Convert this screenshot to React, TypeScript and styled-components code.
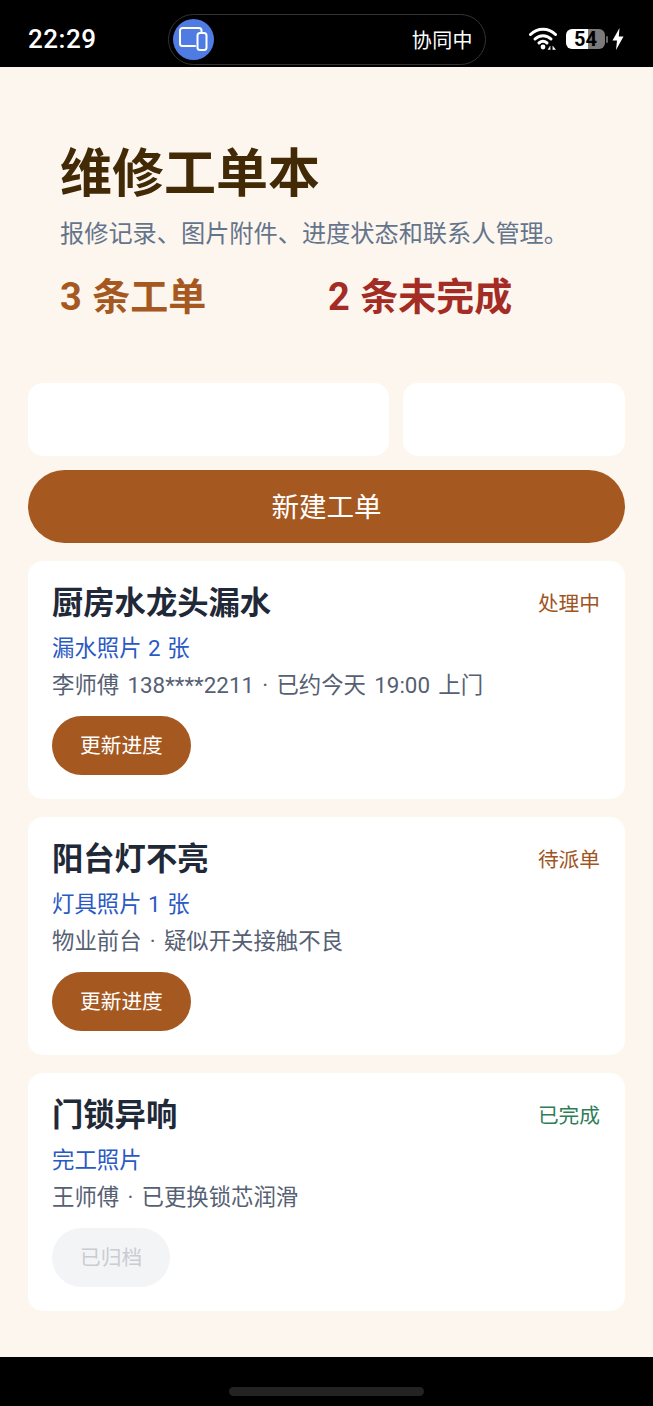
import React from 'react';
import styled, { createGlobalStyle } from 'styled-components';

const GlobalStyle = createGlobalStyle`
  html, body {
    margin: 0;
    padding: 0;
    background: #000000;
  }
  body {
    font-family: Roboto, "Noto Sans CJK SC", "Noto Sans", sans-serif;
  }
  * {
    box-sizing: border-box;
  }
`;

const Screen = styled.div`
  width: 653px;
  height: 1406px;
  display: flex;
  flex-direction: column;
  background: #000000;
  overflow: hidden;
`;

const StatusBar = styled.div`
  height: 67px;
  flex: none;
  padding: 11px 29px 0 28px;
  display: flex;
  align-items: center;
  color: #ffffff;
`;

const Clock = styled.div`
  width: 140px;
  font-size: 26px;
  font-weight: 500;
  letter-spacing: 0.5px;
`;

const Island = styled.div`
  width: 318px;
  height: 51px;
  padding: 0 12px 0 4px;
  border: 1px solid #333333;
  border-radius: 26px;
  display: flex;
  align-items: center;
  justify-content: space-between;
`;

const IslandIcon = styled.div`
  width: 41px;
  height: 41px;
  border-radius: 50%;
  background: #4f7be3;
  display: flex;
  align-items: center;
  justify-content: center;
`;

const IslandLabel = styled.span`
  font-size: 20px;
  letter-spacing: 0.4px;
`;

const StatusIcons = styled.div`
  margin-left: auto;
  display: flex;
  align-items: center;
`;

const Battery = styled.div`
  width: 39px;
  height: 20px;
  margin-left: 8px;
  border-radius: 6px;
  background: linear-gradient(90deg, #ffffff 0 56%, #7a7a7a 56% 100%);
  color: #000000;
  font-size: 20px;
  font-weight: 700;
  line-height: 20px;
  text-align: center;
`;

const BatteryCap = styled.div`
  width: 2px;
  height: 7px;
  margin-left: 1px;
  background: #666666;
  border-radius: 1px;
`;

const Main = styled.main`
  height: 1290px;
  flex: none;
  padding: 72px 28px 0;
  background: #fdf6ef;
`;

const Hero = styled.header`
  padding-left: 32px;
  margin-bottom: 61px;
`;

const Title = styled.h1`
  margin: 0 0 6px;
  font-size: 52px;
  line-height: 72px;
  font-weight: 700;
  color: #422a06;
`;

const Subtitle = styled.p`
  margin: 0 0 21px;
  font-size: 24.2px;
  line-height: 34px;
  color: #64748b;
`;

const Stats = styled.div`
  display: grid;
  grid-template-columns: 268px 1fr;
`;

const Stat = styled.div<{ $color: string }>`
  font-size: 38px;
  line-height: 50px;
  font-weight: 700;
  word-spacing: 1px;
  color: ${props => props.$color};
`;

const Form = styled.div`
  display: grid;
  grid-template-columns: 361px 1fr;
  gap: 14px;
  margin-bottom: 14px;
`;

const Field = styled.div`
  height: 73px;
  border-radius: 15px;
  background: #ffffff;
`;

const CreateButton = styled.button`
  display: block;
  width: 100%;
  height: 73px;
  margin: 0 0 18px;
  padding: 0 0 4px;
  border: none;
  border-radius: 37px;
  background: #a65821;
  color: #ffffff;
  font-family: inherit;
  font-size: 27.5px;
`;

const OrderList = styled.div`
  display: flex;
  flex-direction: column;
  gap: 18px;
`;

const Card = styled.article`
  height: 238px;
  padding: 21px 25px 24px 24px;
  border-radius: 15px;
  background: #ffffff;
`;

const CardHead = styled.div`
  display: flex;
  justify-content: space-between;
  align-items: center;
  margin-bottom: 6px;
`;

const CardTitle = styled.h2`
  margin: 0;
  font-size: 31.3px;
  line-height: 44px;
  font-weight: 700;
  color: #1f2937;
`;

const Status = styled.span<{ $color: string }>`
  font-size: 20.7px;
  margin-top: -5px;
  color: ${props => props.$color};
`;

const Attachment = styled.div`
  margin-bottom: 5px;
  font-size: 22.4px;
  line-height: 32px;
  word-spacing: 1px;
  color: #2b59c3;
`;

const Meta = styled.div`
  margin-bottom: 15px;
  font-size: 22.4px;
  line-height: 32px;
  word-spacing: 2.7px;
  color: #566073;
`;

const ActionButton = styled.button<{ $disabled?: boolean }>`
  display: block;
  height: 59px;
  padding: 0 28px 3px;
  border: none;
  border-radius: 30px;
  background: ${props => (props.$disabled ? '#f3f4f6' : '#a65821')};
  color: ${props => (props.$disabled ? '#c9ccd2' : '#ffffff')};
  font-family: inherit;
  font-size: 20.7px;
`;

const BottomBar = styled.div`
  flex: 1;
  display: flex;
  justify-content: center;
  padding-top: 30px;
`;

const HomeIndicator = styled.div`
  width: 195px;
  height: 9px;
  border-radius: 5px;
  background: #232323;
`;

const orders = [
  { title: '厨房水龙头漏水', status: '处理中', color: '#a0541e', files: '漏水照片 2 张', meta: '李师傅 138****2211 · 已约今天 19:00 上门', action: '更新进度' },
  { title: '阳台灯不亮', status: '待派单', color: '#a0541e', files: '灯具照片 1 张', meta: '物业前台 · 疑似开关接触不良', action: '更新进度' },
  { title: '门锁异响', status: '已完成', color: '#2f7d57', files: '完工照片', meta: '王师傅 · 已更换锁芯润滑', action: '已归档', disabled: true },
];

const DevicesIcon = () => (
  <svg width="30" height="30" viewBox="0 0 30 30" fill="none" stroke="#ffffff" strokeWidth="2">
    <path d="M16 22H3.500A2.500 2.500 0 0 1 1 19.500V6.500A2.500 2.500 0 0 1 3.500 4H20A2.500 2.500 0 0 1 22.500 6.500V9" strokeLinecap="round" />
    <rect x="18.500" y="9" width="9" height="17" rx="2.500" />
  </svg>
);

const WifiIcon = () => (
  <svg width="29" height="24" viewBox="0 0 29 24" fill="none" stroke="#ffffff" strokeWidth="3" strokeLinecap="round">
    <path d="M1.500 7.500C8.500 0.500 19.500 0.500 26.500 7.500" />
    <path d="M6 12C10.500 7.500 17.500 7.500 22 12" />
    <path d="M10 16C12.500 13.800 15.500 13.800 18 16" />
    <circle cx="14" cy="20" r="2.400" fill="#ffffff" stroke="none" />
    <path d="M21 19.500L19 22.500H21ZM24 19.500L26.500 22.500H24Z" fill="#ffffff" strokeWidth="0.500" />
  </svg>
);

const BoltIcon = () => (
  <svg width="12" height="22" viewBox="0 0 12 22" style={{ marginLeft: 4 }}>
    <path d="M7.500 0L0.500 12.500H5L4 22L11.500 8.500H6.800Z" fill="#ffffff" />
  </svg>
);

export default function App() {
  return (
    <Screen>
      <GlobalStyle />
      <StatusBar>
        <Clock>22:29</Clock>
        <Island>
          <IslandIcon>
            <DevicesIcon />
          </IslandIcon>
          <IslandLabel>协同中</IslandLabel>
        </Island>
        <StatusIcons>
          <WifiIcon />
          <Battery>54</Battery>
          <BatteryCap />
          <BoltIcon />
        </StatusIcons>
      </StatusBar>
      <Main>
        <Hero>
          <Title>维修工单本</Title>
          <Subtitle>报修记录、图片附件、进度状态和联系人管理。</Subtitle>
          <Stats>
            <Stat $color="#a65821">3 条工单</Stat>
            <Stat $color="#a32c25">2 条未完成</Stat>
          </Stats>
        </Hero>
        <Form>
          <Field />
          <Field />
        </Form>
        <CreateButton>新建工单</CreateButton>
        <OrderList>
          {orders.map(order => (
            <Card key={order.title}>
              <CardHead>
                <CardTitle>{order.title}</CardTitle>
                <Status $color={order.color}>{order.status}</Status>
              </CardHead>
              <Attachment>{order.files}</Attachment>
              <Meta>{order.meta}</Meta>
              <ActionButton $disabled={order.disabled}>{order.action}</ActionButton>
            </Card>
          ))}
        </OrderList>
      </Main>
      <BottomBar>
        <HomeIndicator />
      </BottomBar>
    </Screen>
  );
}
